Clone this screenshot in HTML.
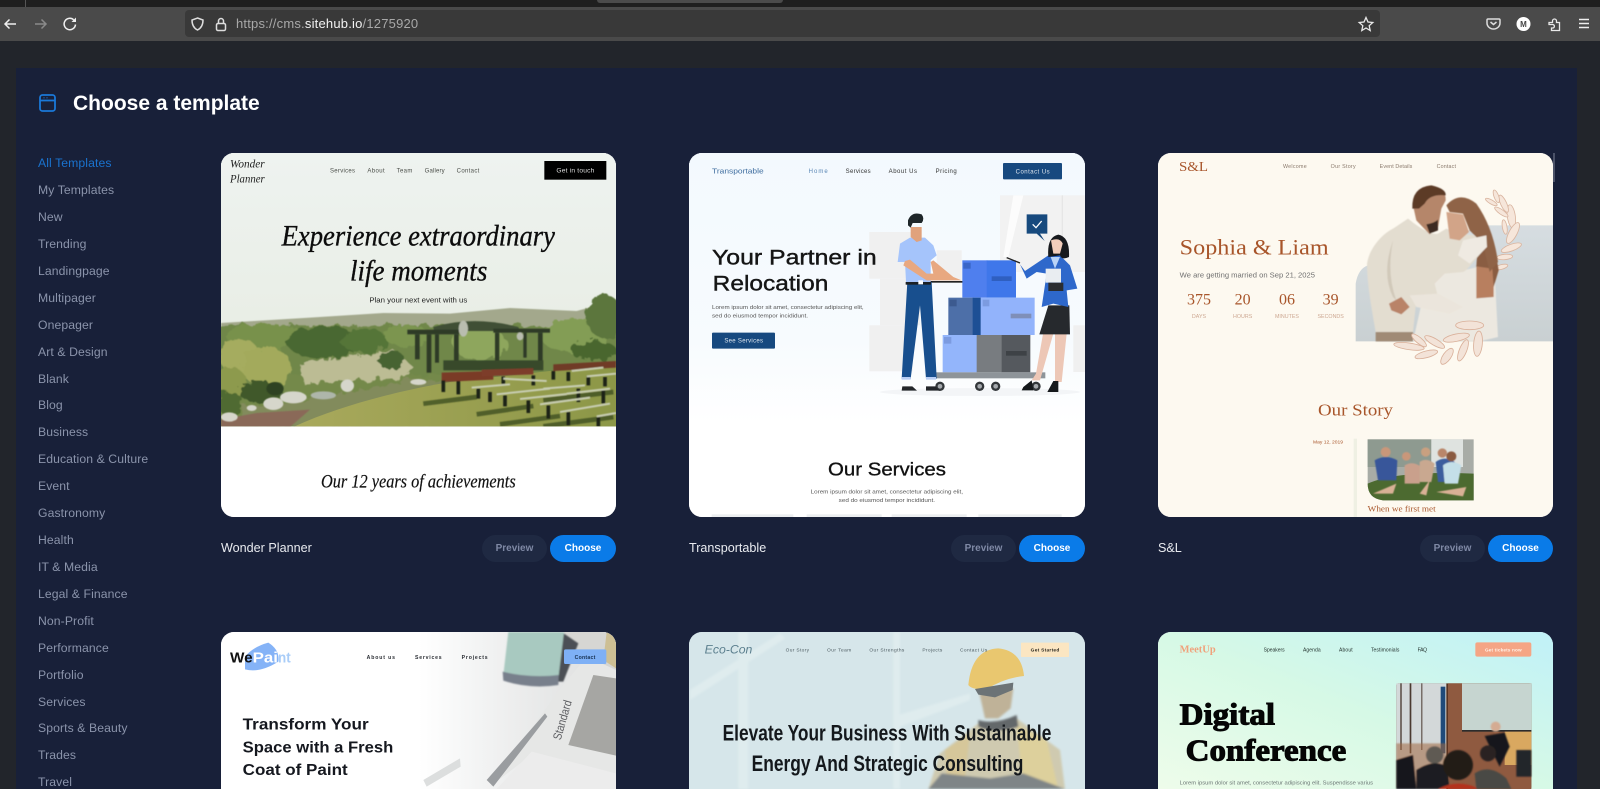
<!DOCTYPE html>
<html lang="en"><head><meta charset="utf-8"><title>Choose a template</title>
<style>
html,body{margin:0;padding:0;width:1600px;height:789px;overflow:hidden;background:#22252b;font-family:"Liberation Sans",sans-serif}
#page{position:relative;width:1600px;height:789px;overflow:hidden;background:#22252b}
.a{position:absolute}
#top{left:0;top:0;width:1600px;height:7px;background:#1f1f1f}
#tab{left:597px;top:0;width:186px;height:3px;background:#4b4b4b;border-radius:0 0 3px 3px}
#bar{left:0;top:7px;width:1600px;height:34px;background:#4a4a4a}
#url{left:185px;top:10px;width:1195px;height:27px;background:#393939;border-radius:4px}
#urlt{left:236px;top:16px;font-size:13px;line-height:16px;color:#a8a8a8;white-space:nowrap;letter-spacing:.2px}
#urlt b{font-weight:400;color:#f2f2f2}
#panel{left:16px;top:68px;width:1561px;height:721px;background:#182039}
h1{position:absolute;left:73px;top:91px;margin:0;font-size:21px;line-height:26px;font-weight:700;color:#fff;white-space:nowrap}
.n{position:absolute;left:38px;font-size:12.200px;line-height:16px;color:#8b94ab;white-space:nowrap;letter-spacing:.1px}
.card{position:absolute;width:395px;height:364px;border-radius:13px;overflow:hidden;background:#fff}
.r2{height:157px;border-radius:13px 13px 0 0}
.card svg{display:block}
.lb{position:absolute;top:540px;font-size:12.600px;line-height:16px;color:#e9ebf0;white-space:nowrap}
.btn{position:absolute;top:535px;height:27px;border-radius:14px;font-size:10px;line-height:27px;font-weight:700;text-align:center}
.p{width:65px;background:#1f2942;color:#7f89a5}
.c{width:66px;background:#0a7be8;color:#fff}
text{font-family:"Liberation Sans",sans-serif}
.s,.s text{font-family:"Liberation Serif",serif}
</style></head><body>
<div id="page">
<div class="a" id="top"></div><div class="a" id="tab"></div><div class="a" id="bar"></div><div class="a" id="url"></div>
<div class="a" style="left:25px;top:0;width:1px;height:7px;background:#555"></div>
<div class="a" id="urlt">https://cms.<b>sitehub.io</b>/1275920</div>
<svg class="a" style="left:0;top:0" width="1600" height="48" fill="none" stroke="#f0f0f0" stroke-width="1.500">
<path d="M16 24H5M9.500 19.500L5 24L9.500 28.500"/>
<path d="M46 24H35M41.500 19.500L46 24L41.500 28.500" stroke="#8a8a8a"/>
<path d="M75.500 24.500a5.700 5.700 0 1 1-1.800-4.700"/><path d="M76 17.500v4.500h-4.500z" fill="#f0f0f0" stroke="none"/>
<path d="M197.500 18l5.500 2c0 4.500-1.500 8-5.500 10c-4-2-5.500-5.500-5.500-10z" stroke="#ddd"/>
<rect x="216.500" y="23.500" width="9" height="7" rx="1.500" stroke="#ddd"/><path d="M218.500 23.500v-2.500a2.500 2.500 0 0 1 5 0v2.500" stroke="#ddd"/>
<path d="M1366 17.500l2 4.500 4.800.5-3.600 3.200 1 4.800-4.200-2.500-4.200 2.500 1-4.800-3.600-3.200 4.800-.5z" stroke="#e8e8e8" stroke-width="1.300"/>
<path d="M1488 19h11c.6 0 1 .4 1 1v3a6.500 6 0 0 1-13 0v-3c0-.6.400-1 1-1z" stroke="#ddd"/><path d="M1490.500 22l3 2.500 3-2.500" stroke="#ddd"/>
<circle cx="1523.500" cy="24" r="7" fill="#fff" stroke="none"/>
<path d="M1549 22.500h3.500v-1.500a2 2 0 0 1 4 0v1.500h3v8h-8v-2.500h1.500a1.800 1.800 0 0 0 0-3.500h-4z" stroke="#e8e8e8" stroke-width="1.300"/>
<path d="M1579 19.500h10M1579 23.500h10M1579 27.500h10" stroke="#eee"/>
<text x="1523.500" y="27" font-size="8" font-weight="700" fill="#444" stroke="none" text-anchor="middle">M</text>
</svg>
<div class="a" id="panel"></div>
<svg class="a" style="left:38px;top:92px" width="22" height="22" fill="none" stroke="#1a78d8" stroke-width="1.800"><rect x="2" y="3" width="15" height="16" rx="2.500"/><path d="M2 8.500h15"/><path d="M5.500 5.800h1M8.500 5.800h1" stroke-width="1.200"/></svg>
<h1>Choose a template</h1>
<div class="n" style="top:155px;color:#1a73cf">All Templates</div>
<div class="n" style="top:182px">My Templates</div>
<div class="n" style="top:209px">New</div>
<div class="n" style="top:236px">Trending</div>
<div class="n" style="top:263px">Landingpage</div>
<div class="n" style="top:290px">Multipager</div>
<div class="n" style="top:317px">Onepager</div>
<div class="n" style="top:344px">Art &amp; Design</div>
<div class="n" style="top:371px">Blank</div>
<div class="n" style="top:397px">Blog</div>
<div class="n" style="top:424px">Business</div>
<div class="n" style="top:451px">Education &amp; Culture</div>
<div class="n" style="top:478px">Event</div>
<div class="n" style="top:505px">Gastronomy</div>
<div class="n" style="top:532px">Health</div>
<div class="n" style="top:559px">IT &amp; Media</div>
<div class="n" style="top:586px">Legal &amp; Finance</div>
<div class="n" style="top:613px">Non-Profit</div>
<div class="n" style="top:640px">Performance</div>
<div class="n" style="top:667px">Portfolio</div>
<div class="n" style="top:694px">Services</div>
<div class="n" style="top:720px">Sports &amp; Beauty</div>
<div class="n" style="top:747px">Trades</div>
<div class="n" style="top:774px">Travel</div>

<!-- CARD 1 -->
<div class="card" style="left:221px;top:153px">
<svg width="395" height="364" viewBox="33 38 1185 1092">
<defs>
<linearGradient id="sky" x1="0" y1="0" x2="0" y2="1"><stop offset="0" stop-color="#eef3f0"/><stop offset=".6" stop-color="#e9eee6"/><stop offset="1" stop-color="#dde1d4"/></linearGradient>
<linearGradient id="gr" x1="0" y1="0" x2="1" y2="0"><stop offset="0" stop-color="#a9a95c"/><stop offset="1" stop-color="#8c9747"/></linearGradient>
<filter id="leaf" x="-5%" y="-5%" width="110%" height="110%"><feTurbulence type="fractalNoise" baseFrequency=".035" numOctaves="3" seed="4"/><feDisplacementMap in="SourceGraphic" scale="34"/><feGaussianBlur stdDeviation="1.800"/></filter>
<filter id="b2"><feGaussianBlur stdDeviation="1.200"/></filter>
<clipPath id="ph"><rect x="33" y="38" width="1185" height="820"/></clipPath>
</defs>
<rect x="33" y="38" width="1185" height="1092" fill="#fff"/>
<g clip-path="url(#ph)">
<rect x="33" y="38" width="1185" height="820" fill="url(#sky)"/>
<path d="M33 548L300 532L520 518L720 520L900 503L1100 512L1218 480V700H33z" fill="#a3a88c" filter="url(#b2)"/>
<rect x="33" y="590" width="1185" height="270" fill="#74894a"/>
<g filter="url(#leaf)">
<rect x="20" y="555" width="1220" height="150" fill="#6f8749"/>
<ellipse cx="170" cy="590" rx="120" ry="38" fill="#78914c"/><ellipse cx="340" cy="605" rx="110" ry="48" fill="#4a6830"/><ellipse cx="460" cy="600" rx="70" ry="36" fill="#557538"/><ellipse cx="590" cy="585" rx="70" ry="30" fill="#7b9550"/><ellipse cx="1090" cy="585" rx="100" ry="50" fill="#839d55"/><ellipse cx="1185" cy="530" rx="55" ry="65" fill="#5b763d"/><ellipse cx="1150" cy="630" rx="70" ry="28" fill="#48662f"/><ellipse cx="810" cy="610" rx="80" ry="50" fill="#8ea65d"/>
<path d="M270 672L400 650L550 628L610 680L590 712L280 730z" fill="#bcbc94"/>
<ellipse cx="90" cy="650" rx="60" ry="55" fill="#a5ac5f"/><ellipse cx="170" cy="680" rx="75" ry="60" fill="#a3aa5c"/><ellipse cx="60" cy="730" rx="50" ry="50" fill="#8d9a4d"/><ellipse cx="150" cy="755" rx="65" ry="30" fill="#3f5829"/><ellipse cx="60" cy="790" rx="40" ry="35" fill="#4f6a30"/><ellipse cx="545" cy="660" rx="42" ry="26" fill="#476430"/>
<path d="M100 800L300 775L450 750L600 715L720 725V860H100z" fill="#828b5b"/>
</g>
<path d="M250 860C400 790 600 745 720 725L1218 670V860z" fill="url(#gr)"/>
<path d="M33 860V838L140 818L300 808L240 860z" fill="#8a6959" filter="url(#b2)"/>
<g filter="url(#b2)" fill="#d6d6cb"><ellipse cx="190" cy="790" rx="30" ry="19"/><ellipse cx="250" cy="771" rx="40" ry="18"/><ellipse cx="340" cy="765" rx="38" ry="12" fill="#aeb6aa"/><ellipse cx="58" cy="830" rx="25" ry="14"/><ellipse cx="412" cy="736" rx="20" ry="19"/><ellipse cx="125" cy="803" rx="15" ry="9"/><ellipse cx="625" cy="725" rx="24" ry="9"/><ellipse cx="195" cy="745" rx="26" ry="20" fill="#2f4220"/></g>
<g filter="url(#b2)" fill="#2d3a28">
<path d="M670 560Q790 525 925 560L930 572H672z" fill="#3f5036"/>
<rect x="592" y="568" width="155" height="14"/><rect x="615" y="582" width="14" height="75"/><rect x="650" y="582" width="14" height="115"/><rect x="675" y="582" width="12" height="85"/><rect x="732" y="582" width="14" height="100"/>
<rect x="850" y="565" width="170" height="12"/><rect x="855" y="577" width="13" height="90"/><rect x="940" y="577" width="10" height="75"/><rect x="984" y="577" width="14" height="110"/>
<rect x="700" y="660" width="300" height="30" fill="#39492a"/>
<ellipse cx="760" cy="565" rx="14" ry="24" fill="#b9bdaf"/><ellipse cx="930" cy="588" rx="10" ry="12" fill="#b9bdaf"/>
</g>
<g filter="url(#b2)">
<g stroke="#3f4f24" stroke-width="14" opacity=".8"><path d="M640 790L800 770M800 822L970 797M870 852L1050 827M1000 858L1210 830M1000 780L1210 755"/></g>
<path d="M695 697L850 692V718L695 725z" fill="#7a3a28"/><path d="M815 688L970 683V702L815 708z" fill="#7d3d2a"/><path d="M1030 672L1218 662V682L1030 692z" fill="#6f3a28"/>
<g stroke="#1d2419" stroke-width="11"><path d="M700 720V755M745 722V762M805 745V775M840 755V785M885 765V798M955 780V818M1015 795V835M1075 815V855M1165 830V858M880 708V732M970 705V735M1030 692V718M1075 695V722M1135 705V735M1185 710V738M1105 745V785M1180 750V790"/></g>
<g stroke="#c8cdb2" stroke-width="6"><path d="M785 742L900 732M860 762L1020 745M930 776L1070 761M990 792L1140 772M1050 815L1200 790M1000 745L1125 735M1070 760L1200 745M1130 708L1218 700M1085 692L1180 682M1160 828L1218 818M880 715L1010 722"/></g>
</g>
</g>
<text class="s" x="60" y="82" font-size="36" font-style="italic" fill="#222" textLength="104" lengthAdjust="spacingAndGlyphs">Wonder</text>
<text class="s" x="60" y="127" font-size="36" font-style="italic" fill="#222" textLength="104" lengthAdjust="spacingAndGlyphs">Planner</text>
<g font-size="18" fill="#4a4d48"><text x="360" y="96" textLength="75">Services</text><text x="472" y="96" textLength="52">About</text><text x="560" y="96" textLength="47">Team</text><text x="644" y="96" textLength="60">Gallery</text><text x="740" y="96" textLength="68">Contact</text></g>
<rect x="1003" y="62" width="186" height="56" fill="#000"/>
<text x="1039" y="97" font-size="20" fill="#ddd" textLength="114">Get in touch</text>
<text class="s" x="215" y="315" font-size="88" font-style="italic" fill="#0c0c0c" stroke="#0c0c0c" stroke-width="1" textLength="820" lengthAdjust="spacingAndGlyphs">Experience extraordinary</text>
<text class="s" x="420" y="420" font-size="88" font-style="italic" fill="#0c0c0c" stroke="#0c0c0c" stroke-width="1" textLength="412" lengthAdjust="spacingAndGlyphs">life moments</text>
<text x="478" y="487" font-size="21" fill="#222" textLength="294" lengthAdjust="spacingAndGlyphs">Plan your next event with us</text>
<text class="s" x="333" y="1042" font-size="58" font-style="italic" fill="#111" stroke="#111" stroke-width=".6" textLength="584" lengthAdjust="spacingAndGlyphs">Our 12 years of achievements</text>
</svg></div>
<div class="lb" style="left:221px">Wonder Planner</div>
<div class="btn p" style="left:482px">Preview</div><div class="btn c" style="left:550px">Choose</div>

<!-- CARD 2 -->
<div class="card" style="left:689px;top:153px;width:396px">
<svg width="396" height="364" viewBox="57 38 1188 1092">
<defs><linearGradient id="t" x1="0" y1="0" x2="0" y2="1"><stop offset="0" stop-color="#f3f9fe"/><stop offset=".7" stop-color="#f7fbfe"/><stop offset="1" stop-color="#fff"/></linearGradient></defs>
<rect x="57" y="38" width="1188" height="1092" fill="#fff"/><rect x="57" y="38" width="1188" height="810" fill="url(#t)"/>
<g fill="#f0f0f0"><rect x="598" y="275" width="150" height="140"/><rect x="630" y="415" width="120" height="140"/><rect x="598" y="555" width="130" height="138"/><rect x="800" y="330" width="75" height="90"/><rect x="1210" y="555" width="35" height="140"/></g>
<rect x="990" y="165" width="255" height="230" fill="#f2f2f2"/><path d="M1030 165H1060L1015 350H1000z" fill="#fcfcfc"/><rect x="1175" y="165" width="4" height="230" fill="#e6e6e6"/>
<ellipse cx="930" cy="755" rx="300" ry="12" fill="#f3f5f7"/>
<path d="M1070 222h62v58h-22l14 22-24-22h-30z" fill="#174a7e"/><path d="M1088 252l10 10 17-20" fill="none" stroke="#fff" stroke-width="4"/>
<rect x="778" y="422" width="100" height="5" fill="#222"/>
<rect x="877" y="360" width="75" height="112" fill="#4f7fee"/><rect x="950" y="360" width="88" height="112" fill="#3f77ea"/>
<rect x="880" y="367" width="22" height="18" fill="#3a66c8"/><rect x="965" y="408" width="60" height="14" fill="#2f5fc0"/>
<rect x="835" y="472" width="75" height="112" fill="#4d6fa8"/><rect x="908" y="472" width="25" height="112" fill="#1d4f95"/><rect x="932" y="472" width="162" height="112" fill="#92b3fb"/>
<rect x="838" y="478" width="22" height="20" fill="#3c5a8f"/><rect x="938" y="478" width="20" height="20" fill="#7c9be0"/><rect x="1022" y="520" width="62" height="14" fill="#7f8fb8"/>
<rect x="818" y="584" width="104" height="112" fill="#93b5fb"/><rect x="920" y="584" width="76" height="112" fill="#787c80"/><rect x="995" y="584" width="86" height="112" fill="#55595e"/>
<rect x="1008" y="632" width="62" height="14" fill="#3e4246"/><rect x="822" y="590" width="22" height="20" fill="#7c9be0"/>
<rect x="776" y="696" width="350" height="18" fill="#8e9499"/>
<g fill="#33373a"><circle cx="810" cy="738" r="14"/><circle cx="929" cy="738" r="14"/><circle cx="977" cy="738" r="14"/><circle cx="1098" cy="738" r="14"/></g>
<g fill="#a5a9ad"><circle cx="810" cy="738" r="7"/><circle cx="929" cy="738" r="7"/><circle cx="977" cy="738" r="7"/><circle cx="1098" cy="738" r="7"/></g>
<path d="M712 425H785L800 715H768L750 495L722 715H695z" fill="#184f8e"/><path d="M695 710h27v8h-27zM768 710h30v8h-30z" fill="#b7cdf5"/>
<path d="M697 738h30l14 13h-46zM768 738h28l14 13h-42z" fill="#23262a"/>
<path d="M690 310L720 292H765L790 315L800 345L782 360L782 425H708L705 365H683z" fill="#a5c4fb"/>
<path d="M705 362L700 375L770 420L875 420L850 410L790 360L782 365L790 400L770 400L720 358z" fill="#e8a880"/>
<path d="M722 260H755V300L740 305L722 290z" fill="#e0a27c"/><path d="M714 240Q725 212 755 222Q765 235 755 248L728 248L722 262L714 255z" fill="#1e2629"/>
<rect x="707" y="425" width="76" height="8" fill="#1c2125"/><rect x="745" y="420" width="14" height="12" fill="#fff"/>
<path d="M1120 575L1098 700L1085 720L1110 720L1150 580zM1155 580L1155 725L1175 725L1190 580z" fill="#edc7b6"/>
<path d="M1060 740L1085 720L1090 750H1055zM1150 722H1165V755H1132z" fill="#15181b"/>
<path d="M1135 495H1198L1200 582H1108z" fill="#26292d"/>
<path d="M1050 372L1065 392L1135 345L1170 345L1200 375L1222 445L1190 450L1195 500L1150 490L1115 500L1130 400L1100 395L1070 415z" fill="#2e68cb"/>
<path d="M1142 350L1170 350L1155 385z" fill="#b9d3f7"/><rect x="1127" y="385" width="46" height="42" fill="#e9edf1"/><rect x="1135" y="427" width="45" height="25" fill="#2a2d31"/>
<path d="M1135 350Q1130 290 1165 283Q1200 290 1197 350Q1175 360 1170 345z" fill="#17191d"/><path d="M1143 300Q1170 290 1178 310L1170 340H1150z" fill="#f2cdbb"/>
<path d="M1010 352L1050 368" stroke="#222" stroke-width="4"/>
<text x="126" y="100" font-size="22" fill="#3f6d9f" textLength="155" lengthAdjust="spacingAndGlyphs">Transportable</text>
<g font-size="18" fill="#333"><text x="416" y="98" fill="#5a86b5" textLength="57">Home</text><text x="527" y="98" textLength="75">Services</text><text x="656" y="98" textLength="85">About Us</text><text x="797" y="98" textLength="63">Pricing</text></g>
<rect x="999" y="68" width="177" height="49" rx="3" fill="#17497f"/><text x="1037" y="99" font-size="18" fill="#dfe7f0" textLength="102">Contact Us</text>
<g font-size="63" fill="#151515" stroke="#151515" stroke-width="1.200"><text x="126" y="372" textLength="494" lengthAdjust="spacingAndGlyphs">Your Partner in</text>
<text x="128" y="450" textLength="347" lengthAdjust="spacingAndGlyphs">Relocation</text></g>
<g font-size="15.500" fill="#555"><text x="126" y="506" textLength="455" lengthAdjust="spacingAndGlyphs">Lorem ipsum dolor sit amet, consectetur adipiscing elit,</text><text x="126" y="532" textLength="288" lengthAdjust="spacingAndGlyphs">sed do eiusmod tempor incididunt.</text></g>
<rect x="126" y="577" width="189" height="48" rx="3" fill="#17497f"/><text x="163" y="607" font-size="18" fill="#dfe7f0" textLength="116">See Services</text>
<text x="474" y="1005" font-size="56" fill="#111" stroke="#111" stroke-width="1" textLength="354" lengthAdjust="spacingAndGlyphs">Our Services</text>
<g font-size="15.500" fill="#555"><text x="422" y="1059" textLength="457" lengthAdjust="spacingAndGlyphs">Lorem ipsum dolor sit amet, consectetur adipiscing elit,</text><text x="506" y="1085" textLength="289" lengthAdjust="spacingAndGlyphs">sed do eiusmod tempor incididunt.</text></g>
<g fill="#eceef0"><rect x="125" y="1122" width="245" height="8"/><rect x="410" y="1122" width="225" height="8"/><rect x="665" y="1122" width="225" height="8"/><rect x="925" y="1122" width="250" height="8"/></g>
</svg></div>
<div class="lb" style="left:689px">Transportable</div>
<div class="btn p" style="left:951px">Preview</div><div class="btn c" style="left:1019px">Choose</div>

<!-- CARD 3 -->
<div class="card" style="left:1158px;top:153px">
<svg width="395" height="364" viewBox="85 38 1185 1092">
<defs><linearGradient id="sea" x1="0" y1="0" x2="0" y2="1"><stop offset="0" stop-color="#d6dde1"/><stop offset="1" stop-color="#c9d0d2"/></linearGradient><filter id="b3"><feGaussianBlur stdDeviation="1.500"/></filter></defs>
<rect x="85" y="38" width="1185" height="1092" fill="#fdf9f0"/>
<path d="M678 603V430Q685 385 715 375L1060 255H1270V603z" fill="url(#sea)"/>
<g fill="#f6e6da" stroke="#d9b5a0" stroke-width="2.500">
<ellipse cx="1145" cy="228" rx="12" ry="35" transform="rotate(-8 1145 228)"/><ellipse cx="1150" cy="278" rx="12" ry="35" transform="rotate(28 1150 278)"/><ellipse cx="1145" cy="322" rx="10" ry="32" transform="rotate(70 1145 322)"/><ellipse cx="1122" cy="190" rx="9" ry="28" transform="rotate(-25 1122 190)"/><ellipse cx="1100" cy="168" rx="7" ry="20" transform="rotate(-20 1100 168)"/><ellipse cx="1115" cy="215" rx="7" ry="24" transform="rotate(-55 1115 215)"/><ellipse cx="1085" cy="185" rx="6" ry="20" transform="rotate(-60 1085 185)"/><ellipse cx="1125" cy="260" rx="7" ry="22" transform="rotate(-10 1125 260)"/><ellipse cx="1125" cy="350" rx="8" ry="24" transform="rotate(85 1125 350)"/><ellipse cx="1115" cy="380" rx="7" ry="20" transform="rotate(75 1115 380)"/>
</g>
<g filter="url(#b3)">
<path d="M905 395L1000 390L1045 380L1095 400L1105 590L1050 603H850L880 470z" fill="#ece8e0"/>
<path d="M1040 375L1092 385L1092 470L1040 474z" fill="#b87f5f"/>
<path d="M1045 300Q1095 300 1107 390L1092 440L1088 385L1040 378z" fill="#8a5d42"/>
<path d="M712 370C720 320 760 280 790 265L835 235C860 255 900 285 925 280L950 265C990 285 1040 285 1070 285L1072 320C1040 350 1015 390 1000 395L945 400L915 430L925 470L860 480L850 575H738C725 500 712 430 712 370z" fill="#e3ddd0"/>
<path d="M790 300Q770 400 800 480L790 470Q755 400 790 300z" fill="#d1c9ba"/>
<path d="M738 575H850V603H738z" fill="#a08a74"/>
<path d="M850 195Q855 140 905 135Q950 145 948 180L935 205L925 262L900 282L860 240z" fill="#b5866a"/>
<path d="M848 205Q845 140 905 135Q950 145 948 165Q900 160 885 190L868 205z" fill="#5b3b28"/><path d="M890 252Q915 248 925 238L925 270L900 280z" fill="#3d2c22"/>
<path d="M950 195Q990 150 1040 190Q1090 260 1105 365L1080 395L1060 310L1020 270L1000 220L960 215z" fill="#8f6347"/>
<path d="M950 215L1000 222L1018 275L990 300L960 295z" fill="#d2a488"/>
<path d="M1000 300L1070 285L1072 320L1020 370L985 345z" fill="#efeae2"/>
<path d="M840 465L925 460L1000 500L960 520L860 500z" fill="#ebe5dc"/><path d="M778 490L815 470L840 500L815 522L785 510z" fill="#b98367"/>
</g>
<g fill="#f3e3d8" stroke="#d9b09a" stroke-width="2.500">
<ellipse cx="838" cy="618" rx="46" ry="10" transform="rotate(8 838 618)"/><ellipse cx="890" cy="642" rx="35" ry="10" transform="rotate(-15 890 642)"/><ellipse cx="952" cy="648" rx="12" ry="28" transform="rotate(35 952 648)"/><ellipse cx="1000" cy="630" rx="11" ry="34" transform="rotate(22 1000 630)"/><ellipse cx="1045" cy="610" rx="13" ry="38" transform="rotate(5 1045 610)"/><ellipse cx="980" cy="592" rx="40" ry="11" transform="rotate(-12 980 592)"/><ellipse cx="1020" cy="555" rx="42" ry="13"/><ellipse cx="868" cy="600" rx="28" ry="9" transform="rotate(40 868 600)"/><ellipse cx="915" cy="605" rx="34" ry="10" transform="rotate(30 915 605)"/>
</g>
<g fill="#a8552a">
<text class="s" x="148" y="92" font-size="40" textLength="87" lengthAdjust="spacingAndGlyphs">S&amp;L</text>
<text class="s" x="150" y="342" font-size="66" textLength="447" lengthAdjust="spacingAndGlyphs">Sophia &amp; Liam</text>
<g class="s" font-size="48" text-anchor="middle"><text x="208" y="493">375</text><text x="339" y="493">20</text><text x="472" y="493">06</text><text x="603" y="493">39</text></g>
<text class="s" x="565" y="825" font-size="50" textLength="225" lengthAdjust="spacingAndGlyphs">Our Story</text>
<text x="550" y="910" font-size="14" textLength="90" lengthAdjust="spacingAndGlyphs">May 12, 2019</text>
<text class="s" x="714" y="1114" font-size="25" textLength="204" lengthAdjust="spacingAndGlyphs">When we first met</text>
</g>
<g font-size="16" fill="#8a7a6c"><text x="460" y="83" textLength="71">Welcome</text><text x="603" y="83" textLength="75">Our Story</text><text x="750" y="83" textLength="98">Event Details</text><text x="921" y="83" textLength="58">Contact</text></g>
<text x="150" y="412" font-size="22" fill="#707070" textLength="406" lengthAdjust="spacingAndGlyphs">We are getting married on Sep 21, 2025</text>
<g font-size="16" fill="#cda892" text-anchor="middle"><text x="208" y="533">DAYS</text><text x="339" y="533">HOURS</text><text x="472" y="533">MINUTES</text><text x="603" y="533">SECONDS</text></g>
<rect x="672" y="895" width="10" height="235" fill="#eff0e3"/>
<path d="M714 897H1032V1080H760Q714 1075 714 1030z" fill="#a8aca6"/>
<path d="M714 897H905V980H714z" fill="#8e9a90"/><path d="M905 897H1000V980H905z" fill="#dfe3e0"/>
<path d="M714 1030Q800 990 1032 1000V1080H760Q714 1075 714 1030z" fill="#4c6a30"/>
<g filter="url(#b3)"><path d="M735 960Q768 940 803 960L800 1020H745z" fill="#38579a"/><path d="M918 965Q945 945 975 965L980 1025H925z" fill="#3a5d9e"/><path d="M940 975Q965 955 995 975L985 1030H945z" fill="#c4dfe8"/><path d="M825 975Q850 960 875 980L870 1030H825z" fill="#c9a08c"/><path d="M870 965Q890 950 915 970L905 1025H870z" fill="#c9a890"/>
<circle cx="768" cy="935" r="15" fill="#c9977a"/><circle cx="830" cy="948" r="13" fill="#c9977a"/><circle cx="888" cy="935" r="14" fill="#c9a080"/><circle cx="938" cy="938" r="14" fill="#b9866a"/><circle cx="965" cy="948" r="15" fill="#8a5a40"/><path d="M730 1060L800 1030L790 1060zM870 1060L900 1020L890 1065zM920 1055L1010 1040L1000 1068z" fill="#d9b195"/></g>
</svg></div>
<div class="lb" style="left:1158px">S&amp;L</div>
<div class="btn p" style="left:1420px">Preview</div><div class="btn c" style="left:1488px;width:65px">Choose</div>
<div class="a" style="left:1553px;top:153px;width:2px;height:29px;background:#4b5268"></div>

<!-- CARD 4 -->
<div class="card r2" style="left:221px;top:632px">
<svg width="395" height="157" viewBox="33 66 1185 471">
<defs><linearGradient id="wp" x1="0" y1="0" x2="1" y2="0"><stop offset="0" stop-color="#fff"/><stop offset=".5" stop-color="#fff"/><stop offset=".75" stop-color="#eceded"/><stop offset="1" stop-color="#dcdddd"/></linearGradient><filter id="b4"><feGaussianBlur stdDeviation="2.500"/></filter></defs>
<rect x="33" y="66" width="1185" height="471" fill="url(#wp)"/>
<path d="M1060 66H1218V180L1110 130z" fill="#d6d6d3"/><path d="M1190 66H1218V175L1180 150z" fill="#cdbf94"/>
<path d="M1040 250L1130 140L1218 180V490L970 430L840 530z" fill="#e6e7e6"/>
<path d="M1075 405L1150 195L1218 205V437z" fill="#a6a6a3"/>
<path d="M830 510L1005 310L1012 320L850 530z" fill="#9a9da0"/>
<path d="M965 425L1218 490V537H860z" fill="#ececec"/>
<path d="M640 510L750 445L752 470L650 530z" fill="#dcdede"/>
<g filter="url(#b4)"><path d="M1055 66L1105 100L1060 215H1040z" fill="#4b5054"/><path d="M895 66H1062L1045 205Q960 215 880 195z" fill="#a8c9c0"/><path d="M878 185Q960 205 1046 195L1045 225Q960 238 880 212z" fill="#78808c"/></g>
<path d="M105 140Q130 110 175 98Q210 120 205 155Q150 190 105 178z" fill="#85b3f7"/>
<text x="60" y="158" font-size="44" font-weight="700" fill="#111" textLength="68" lengthAdjust="spacingAndGlyphs">We</text>
<text x="128" y="158" font-size="44" font-weight="700" fill="#fff" textLength="76" lengthAdjust="spacingAndGlyphs">Pai</text>
<text x="204" y="158" font-size="44" font-weight="700" fill="#a9cdf8" textLength="38" lengthAdjust="spacingAndGlyphs">nt</text>
<g font-size="15.500" font-weight="700" fill="#2a2d33"><text x="470" y="147" textLength="85">About us</text><text x="615" y="147" textLength="80">Services</text><text x="755" y="147" textLength="78">Projects</text></g>
<rect x="1062" y="118" width="127" height="44" rx="5" fill="#7eb0f5"/><text x="1094" y="147" font-size="15.500" font-weight="700" fill="#173050" textLength="62">Contact</text>
<g font-size="47" font-weight="700" fill="#15181f"><text x="98" y="358" textLength="378" lengthAdjust="spacingAndGlyphs">Transform Your</text><text x="98" y="427" textLength="452" lengthAdjust="spacingAndGlyphs">Space with a Fresh</text><text x="98" y="495" textLength="315" lengthAdjust="spacingAndGlyphs">Coat of Paint</text></g>
<text transform="translate(1052 392) rotate(-74)" font-size="36" fill="#5f6064" textLength="122" lengthAdjust="spacingAndGlyphs">Standard</text>
</svg></div>

<!-- CARD 5 -->
<div class="card r2" style="left:689px;top:632px;width:396px;background:#d7e7ea">
<svg width="396" height="157" viewBox="57 66 1188 471">
<defs><filter id="b5"><feGaussianBlur stdDeviation="3.500"/></filter></defs>
<rect x="57" y="66" width="1188" height="471" fill="#d6e6ea"/>
<g filter="url(#b5)">
<path d="M205 66H235V537H205zM60 240L330 70L345 85L60 270zM670 66H690V537H670zM670 320L900 250V270L690 350z" fill="#dfecee"/>
<path d="M810 430L925 340L1040 325L1170 420L1185 537H775z" fill="#cfcab0"/>
<path d="M1040 345L1130 390L1165 537H1060z" fill="#ddd09c"/>
<path d="M825 420L900 370L885 500L830 500z" fill="#d6c79a"/>
<path d="M925 330Q975 345 1040 315L1045 350Q975 375 925 350z" fill="#63686a"/>
<path d="M775 537L815 490L960 505L1060 490L1185 537z" fill="#7f8587"/>
<path d="M925 235H1030L1022 295L985 325H945z" fill="#bfb298"/>
</g>
<path d="M895 225Q905 118 985 115Q1055 122 1062 198Q1000 205 950 238Q905 240 895 225z" fill="#e9c76f"/>
<path d="M915 237L1030 218L1028 240L975 262L925 254z" fill="#6c7376"/>
<text x="104" y="130" font-size="36" font-style="italic" fill="#5d808f" textLength="143" lengthAdjust="spacingAndGlyphs">Eco-Con</text>
<g font-size="14.500" fill="#4c5a60"><text x="347" y="124" textLength="70">Our Story</text><text x="471" y="124" textLength="73">Our Team</text><text x="598" y="124" textLength="105">Our Strengths</text><text x="757" y="124" textLength="60">Projects</text><text x="870" y="124" textLength="82">Contact Us</text></g>
<rect x="1053" y="98" width="144" height="43" rx="2" fill="#fbe6c2"/><text x="1082" y="124" font-size="14.500" font-weight="700" fill="#2c2a22" textLength="86">Get Started</text>
<text x="158" y="392" font-size="66" font-weight="700" fill="#14181c" textLength="986" lengthAdjust="spacingAndGlyphs">Elevate Your Business With Sustainable</text>
<text x="245" y="483" font-size="66" font-weight="700" fill="#14181c" textLength="815" lengthAdjust="spacingAndGlyphs">Energy And Strategic Consulting</text>
</svg></div>

<!-- CARD 6 -->
<div class="card r2" style="left:1158px;top:632px">
<svg width="395" height="157" viewBox="85 66 1185 471">
<defs><linearGradient id="mu" x1="0" y1="1" x2="1" y2="0"><stop offset="0" stop-color="#eefcea"/><stop offset=".5" stop-color="#d6f9e6"/><stop offset="1" stop-color="#c0f1f8"/></linearGradient><filter id="b6"><feGaussianBlur stdDeviation="2"/></filter></defs>
<rect x="85" y="66" width="1185" height="471" fill="url(#mu)"/>
<rect x="800" y="220" width="405" height="317" rx="6" fill="#59321f"/>
<rect x="955" y="220" width="250" height="317" fill="#8f5a40"/>
<rect x="800" y="220" width="150" height="317" fill="#d3d8d9"/>
<g fill="#4a3a30"><rect x="812" y="220" width="4" height="200"/><rect x="840" y="220" width="5" height="210"/><rect x="875" y="220" width="3" height="200"/></g>
<rect x="933" y="230" width="14" height="200" fill="#1f4a7a"/>
<rect x="997" y="220" width="208" height="140" fill="#c6d5d0"/><rect x="997" y="360" width="208" height="5" fill="#2c2c2c"/>
<rect x="1125" y="365" width="80" height="100" fill="#d9a860"/>
<g filter="url(#b6)">
<path d="M800 400L950 400V537H800z" fill="#a0663e" opacity=".55"/>
<circle cx="1098" cy="350" r="15" fill="#d4ab92"/><path d="M1065 378L1125 368L1140 410L1110 470L1085 420z" fill="#15171a"/><rect x="1160" y="420" width="45" height="80" fill="#22252a"/>
<path d="M800 450L850 435L860 537H800z" fill="#15161a"/>
<circle cx="915" cy="435" r="26" fill="#5e5a52"/><path d="M860 480Q915 445 950 470L960 537H860z" fill="#1b1d21"/>
<circle cx="985" cy="465" r="45" fill="#241a16"/><path d="M925 537Q985 505 1050 537z" fill="#b3321d"/>
<circle cx="1075" cy="430" r="24" fill="#2a2320"/><path d="M1035 490Q1080 460 1130 505L1145 537H1040z" fill="#4a4a44"/>
</g>
<text class="s" x="150" y="127" font-size="32" font-weight="700" fill="#f0a27c" textLength="108" lengthAdjust="spacingAndGlyphs">MeetUp</text>
<g font-size="15" fill="#22302c"><text x="402" y="125" textLength="63">Speakers</text><text x="520" y="125" textLength="53">Agenda</text><text x="628" y="125" textLength="41">About</text><text x="724" y="125" textLength="85">Testimonials</text><text x="864" y="125" textLength="28">FAQ</text></g>
<rect x="1037" y="97" width="168" height="43" rx="6" fill="#f5a585"/><text x="1066" y="124" font-size="14" font-weight="700" fill="#fff3ea" textLength="110">Get tickets now</text>
<text class="s" x="150" y="343" font-size="92" font-weight="700" fill="#050505" textLength="286" lengthAdjust="spacingAndGlyphs" stroke="#050505" stroke-width="3">Digital</text>
<text class="s" x="168" y="452" font-size="92" font-weight="700" fill="#050505" textLength="482" lengthAdjust="spacingAndGlyphs" stroke="#050505" stroke-width="3">Conference</text>
<text x="150" y="524" font-size="15" fill="#6c7775" textLength="580" lengthAdjust="spacingAndGlyphs">Lorem ipsum dolor sit amet, consectetur adipiscing elit. Suspendisse varius</text>
</svg></div>
</div>
</body></html>
